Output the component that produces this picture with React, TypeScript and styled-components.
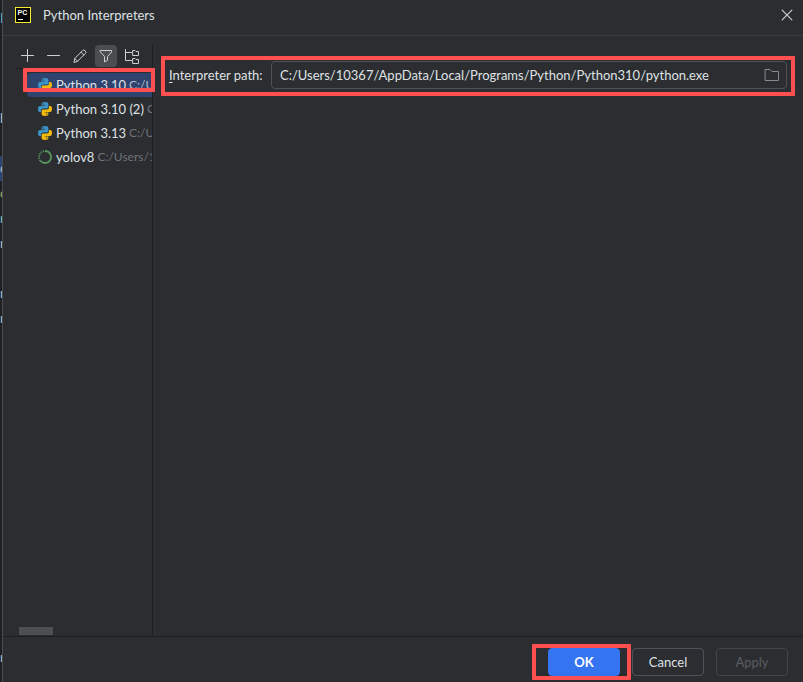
import React from "react";
import styled, { createGlobalStyle, css } from "styled-components";

const GlobalStyle = createGlobalStyle`
  *, *::before, *::after { box-sizing: border-box; }
  html, body, #root { height: 100%; }
  body {
    margin: 0;
    overflow: hidden;
    background: #1e1f22;
    color: #dfe1e5;
    font: 13px/16px Lato, "Noto Sans", sans-serif;
  }
  button, input { font: inherit; color: inherit; }
`;

const Screen = styled.div`
  display: flex;
  height: 100%;
`;

const EditorEdge = styled.div`
  flex: 0 0 2px;
  display: flex;
  flex-direction: column;
  padding: 6px 0 12px;
  overflow: hidden;
`;

const EditorLine = styled.div<{ $color?: string; $active?: boolean; $last?: boolean }>`
  flex: 0 0 25px;
  margin-top: ${(p) => (p.$last ? "auto" : "0")};
  line-height: 25px;
  color: ${(p) => p.$color ?? "#bcbec4"};
  background: ${(p) => (p.$active ? "#2e436e" : "transparent")};
`;

const Dialog = styled.div`
  flex: 1;
  min-width: 0;
  display: flex;
  flex-direction: column;
  background: #2b2d30;
  border-left: 1px solid #4b4c4f;
`;

const TitleBar = styled.header`
  display: flex;
  align-items: center;
  flex: 0 0 36px;
  padding: 0 10px 6px 12px;
  border-bottom: 1px solid #3c3e42;
`;

const Title = styled.h1`
  flex: 1;
  margin: 0 0 0 12px;
  font-size: 13px;
  font-weight: 400;
`;

const IconButton = styled.button<{ $active?: boolean; $size?: number }>`
  display: grid;
  place-items: center;
  flex: none;
  width: ${(p) => p.$size ?? 22}px;
  height: ${(p) => p.$size ?? 22}px;
  padding: 0;
  border: 0;
  border-radius: 4px;
  background: ${(p) => (p.$active ? "#4b4d51" : "transparent")};
  color: #ced0d6;
`;

const BrowseButton = styled(IconButton)`
  color: #868a91;
`;

const Body = styled.main`
  flex: 1;
  min-height: 0;
  display: flex;
  padding-top: 8px;
`;

const Sidebar = styled.aside`
  flex: 0 0 150px;
  min-width: 0;
  display: flex;
  flex-direction: column;
  padding-left: 12px;
  border-right: 1px solid #1e1f22;
`;

const Toolbar = styled.div`
  display: flex;
  gap: 4px;
  height: 25px;
  padding: 1px 0 0 2px;
  border-bottom: 1px solid #1e1f22;
`;

const List = styled.ul`
  flex: 1;
  margin: 0;
  padding: 4px 0 0 12px;
  list-style: none;
`;

const Item = styled.li<{ $selected?: boolean }>`
  position: relative;
  height: 24px;
  border-radius: 4px 0 0 4px;
  background: ${(p) => (p.$selected ? "#2e436e" : "transparent")};
`;

const ItemContent = styled.div`
  display: flex;
  align-items: center;
  gap: 4px;
  height: 24px;
  padding-left: 11px;
  overflow: hidden;
  white-space: nowrap;
  svg { flex: none; }
`;

const Path = styled.span<{ $selected?: boolean }>`
  margin-left: -1px;
  font-size: 12px;
  color: ${(p) => (p.$selected ? "#b9bfcc" : "#6f737a")};
`;

const ScrollThumb = styled.div`
  width: 34px;
  height: 8px;
  margin: 0 0 1px 4px;
  background: #4d4e51;
`;

const Details = styled.section`
  flex: 1;
  min-width: 0;
  padding: 17px 16px 0;
`;

const Field = styled.div`
  position: relative;
  display: flex;
  align-items: center;
  gap: 6px;
`;

const Label = styled.label`
  flex: 0 0 96px;
  white-space: nowrap;
  u { text-underline-offset: 2px; }
`;

const InputBox = styled.div`
  flex: 1;
  min-width: 0;
  display: flex;
  align-items: center;
  height: 28px;
  padding: 0 3px 0 8px;
  border: 1px solid #4e5157;
  border-radius: 4px;
`;

const Input = styled.input`
  flex: 1;
  min-width: 0;
  padding: 0;
  border: 0;
  outline: 0;
  background: transparent;
`;

const Footer = styled.footer`
  display: flex;
  align-items: flex-start;
  justify-content: flex-end;
  gap: 12px;
  flex: 0 0 46px;
  padding: 11px 15px 0;
  border-top: 1px solid #1e1f22;
`;

const ButtonSlot = styled.div`
  position: relative;
`;

const Button = styled.button<{ $primary?: boolean }>`
  display: block;
  width: 72px;
  height: 28px;
  padding: 0;
  border: 1px solid #4e5157;
  border-radius: 4px;
  background: transparent;
  &:disabled { color: #5a5d63; border-color: #43454a; }
  ${(p) =>
    p.$primary &&
    css`
      border-color: #3574f0;
      background: #3574f0;
      color: #fff;
      font-weight: 700;
    `}
`;

const Highlight = styled.div<{ $inset: string }>`
  position: absolute;
  z-index: 1;
  inset: ${(p) => p.$inset};
  border: 4px solid #fe5050;
  border-radius: 1px;
  pointer-events: none;
`;

const Stroke = ({ d, size = 16, width = 1 }: { d: string; size?: number; width?: number }) => (
  <svg width={size} height={size} viewBox="0 0 16 16" fill="none" stroke="currentColor"
    strokeWidth={width} strokeLinejoin="round" strokeLinecap="round" aria-hidden="true">
    <path d={d} />
  </svg>
);

const tools = [
  { name: "Add", d: "M7.5 1.5v12M1.5 7.5h12" },
  { name: "Remove", d: "M1.5 7.5h12" },
  { name: "Edit", d: "M2 14l.8-3.6 7.8-7.8a1.7 1.7 0 0 1 2.4 0l.4.4a1.7 1.7 0 0 1 0 2.4l-7.8 7.8zM9 4.2 11.8 7M2.8 10.4l2.8 2.8" },
  { name: "Filter", d: "M2.5 2.5h11v1.6l-4 4.4v3.7l-3 1.8V8.5l-4-4.4z", active: true },
  { name: "Show paths", d: "M1.500 1.500v11h6M1.500 4.500h6M9 2.500h2l1 1h2.500v4H9zM9 10.500h2l1 1h2.500v4H9z" },
];

const PythonIcon = () => (
  <svg width="14" height="14" viewBox="0 0 14 14" aria-hidden="true">
    <path fill="#3c94c6" d="M6.900 0C4.500 0 3.600.8 3.600 2v1.500h3.500V4H2C.7 4 0 5.100 0 7s.7 3 1.700 3H3V8.500C3 7.300 4 6.500 5.200 6.500h3.500c1 0 1.700-.7 1.700-1.700V2c0-1.200-1-2-3.500-2z" />
    <path fill="#f2bb0c" d="M7.100 14c2.400 0 3.300-.8 3.300-2v-1.500H6.900V10H12c1.300 0 2-1.100 2-3s-.7-3-1.700-3H11v1.500c0 1.200-1 2-2.200 2H5.300c-1 0-1.700.7-1.700 1.700V12c0 1.200 1 2 3.500 2z" />
    <circle cx="5.200" cy="1.900" r=".6" fill="#2b2d30" />
    <circle cx="8.800" cy="12.100" r=".6" fill="#2b2d30" />
  </svg>
);

const CondaIcon = () => (
  <svg width="14" height="14" viewBox="0 0 14 14" fill="none" stroke="#57965c" aria-hidden="true">
    <path strokeWidth="1.800" d="M7 1a6 6 0 1 1-4.600 9.800" />
    <path strokeWidth="1.800" strokeDasharray="1.200 1" d="M2.400 10.800A6 6 0 0 1 7 1" />
  </svg>
);

const AppIcon = () => (
  <svg width="16" height="16" viewBox="0 0 16 16" aria-hidden="true">
    <rect x=".5" y=".5" width="15" height="15" fill="#000" stroke="#f4ee2a" />
    <text x="2.500" y="8" fill="#fff" fontFamily="Liberation Sans, sans-serif" fontSize="7" fontWeight="700">PC</text>
    <path d="M3 12.500h5" stroke="#fff" />
  </svg>
);

const interpreters = [
  { name: "Python 3.10", path: "C:/Users/10367/AppData", selected: true },
  { name: "Python 3.10 (2)", path: "C:/Users/10367/AppData" },
  { name: "Python 3.13", path: "C:/Users/10367/AppData" },
  { name: "yolov8", path: "C:/Users/10367/.conda", conda: true },
];

const editorLines = [
  { text: "E", color: "#7fb5b5" }, {}, {}, {}, { text: "b" }, {},
  { text: "o", active: true }, { text: "c", color: "#b3ae60" }, { text: "r", color: "#8ac6bd" },
  { text: "r" }, {}, { text: "r" }, { text: "r" }, { text: "r", last: true },
];

export default function App() {
  return (
    <Screen>
      <GlobalStyle />
      <EditorEdge aria-hidden="true">
        {editorLines.map((line, i) => (
          <EditorLine key={i} $color={line.color} $active={line.active} $last={line.last}>{line.text}</EditorLine>
        ))}
      </EditorEdge>
      <Dialog role="dialog" aria-labelledby="dialog-title">
        <TitleBar>
          <AppIcon />
          <Title id="dialog-title">Python Interpreters</Title>
          <IconButton $size={12} aria-label="Close">
            <Stroke d="M1.500 1.500l13 13M14.500 1.500l-13 13" size={12} width={1.6} />
          </IconButton>
        </TitleBar>
        <Body>
          <Sidebar>
            <Toolbar role="toolbar">
              {tools.map((tool) => (
                <IconButton key={tool.name} aria-label={tool.name} $active={tool.active}>
                  <Stroke d={tool.d} />
                </IconButton>
              ))}
            </Toolbar>
            <List>
              {interpreters.map((item) => (
                <Item key={item.name} $selected={item.selected}>
                  <ItemContent>
                    {item.conda ? <CondaIcon /> : <PythonIcon />}
                    <span>{item.name}</span>
                    <Path $selected={item.selected}>{item.path}</Path>
                  </ItemContent>
                  {item.selected && <Highlight $inset="-5px -3px 5px -4px" />}
                </Item>
              ))}
            </List>
            <ScrollThumb />
          </Sidebar>
          <Details>
            <Field>
              <Label htmlFor="path"><u>I</u>nterpreter path:</Label>
              <InputBox>
                <Input id="path" defaultValue="C:/Users/10367/AppData/Local/Programs/Python/Python310/python.exe" />
                <BrowseButton aria-label="Browse">
                  <Stroke d="M1.500 2.500h4.500l2 2h6.500v9h-13z" />
                </BrowseButton>
              </InputBox>
              <Highlight $inset="-5px -8px -7px -8px" />
            </Field>
          </Details>
        </Body>
        <Footer>
          <ButtonSlot>
            <Button $primary>OK</Button>
            <Highlight $inset="-4px -11px -4px -16px" />
          </ButtonSlot>
          <Button>Cancel</Button>
          <Button disabled>Apply</Button>
        </Footer>
      </Dialog>
    </Screen>
  );
}
